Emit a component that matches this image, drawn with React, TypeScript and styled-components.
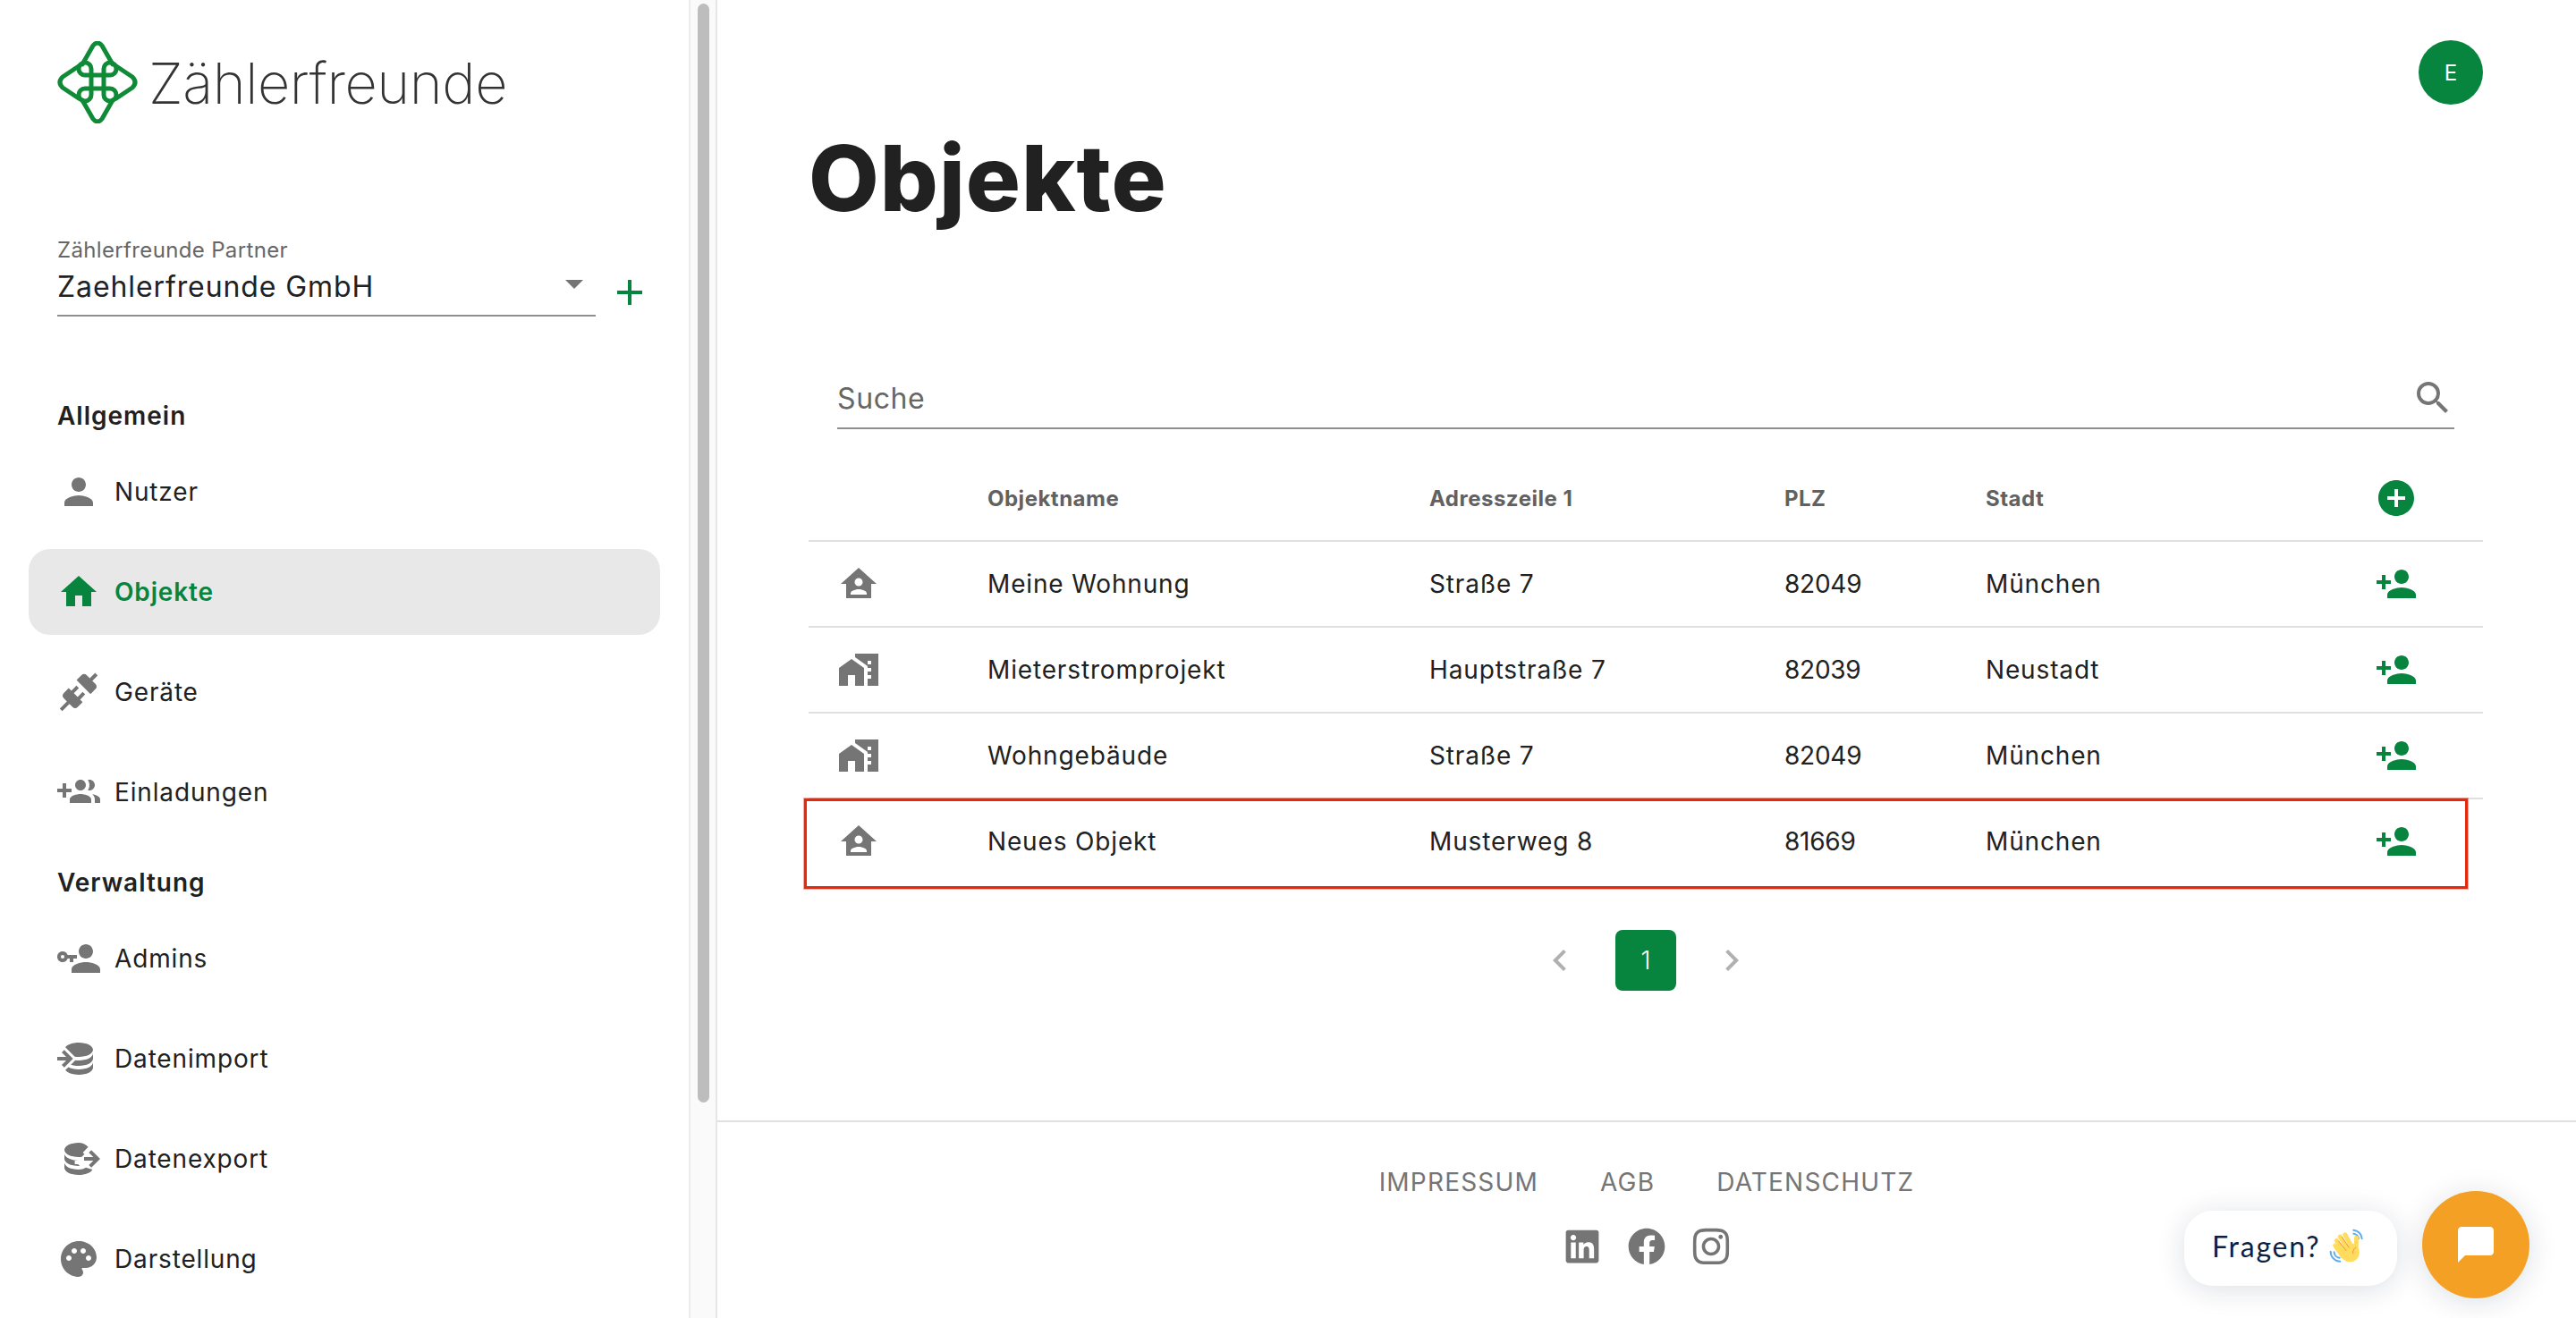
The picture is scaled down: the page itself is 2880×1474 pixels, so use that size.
import React from 'react';
import styled, { createGlobalStyle } from 'styled-components';
import {
  MdAdd,
  MdAddCircle,
  MdChatBubble,
  MdChevronLeft,
  MdChevronRight,
  MdHome,
  MdMapsHomeWork,
  MdPalette,
  MdPerson,
  MdPersonAdd,
  MdSearch,
} from 'react-icons/md';
import { FaFacebook, FaInstagram, FaLinkedin } from 'react-icons/fa';

const GREEN = '#07853f';
const GREY = '#757575';

const GlobalStyle = createGlobalStyle`
  html, body {
    margin: 0;
    padding: 0;
    height: 100%;
    overflow: hidden;
    background: #fff;
  }
  body {
    font-family: Inter, "Liberation Sans", sans-serif;
    color: #212121;
  }
  * { box-sizing: border-box; }
`;

const Page = styled.div`
  display: flex;
  width: 2880px;
  height: 1474px;
  overflow: hidden;
`;

/* sidebar */

const Sidebar = styled.aside`
  display: flex;
  flex: 0 0 802px;
  height: 100%;
  border-right: 2px solid #e6e6e6;
`;

const SideContent = styled.div`
  flex: 1;
  padding: 46px 32px 0;
  overflow: hidden;
`;

const ScrollTrack = styled.div`
  flex: 0 0 30px;
  padding: 4px 7px 0 8px;
  background: #fafafa;
  border-left: 2px solid #ececec;
`;

const ScrollThumb = styled.div`
  height: 1229px;
  border-radius: 8px;
  background: #bdbdbd;
`;

const Logo = styled.div`
  display: flex;
  align-items: center;
  gap: 12px;
  height: 92px;
  margin-left: 32px;
`;

const LogoText = styled.span`
  font-size: 63px;
  font-weight: 200;
  line-height: 1;
  letter-spacing: -0.45px;
  color: #333;
  padding-top: 2px;
`;

const PartnerRow = styled.div`
  display: flex;
  align-items: flex-end;
  margin: 122px 0 0 32px;
`;

const PartnerSelect = styled.div`
  position: relative;
  width: 602px;
  height: 94px;
  padding-top: 2px;
  border-bottom: 2px solid #8e8e8e;
`;

const PartnerLabel = styled.div`
  font-size: 24px;
  line-height: 36px;
  color: #666;
  letter-spacing: 0.35px;
`;

const PartnerValue = styled.div`
  margin-top: 1px;
  font-size: 32px;
  line-height: 44px;
  letter-spacing: 0.9px;
`;

const SelectArrow = styled.span`
  position: absolute;
  right: 14px;
  top: 53px;
  width: 0;
  height: 0;
  border-left: 10px solid transparent;
  border-right: 10px solid transparent;
  border-top: 10px solid ${GREY};
`;

const AddPartner = styled.span`
  display: flex;
  margin: 0 0 3px 14px;
  color: ${GREEN};
`;

const SectionTitle = styled.h2<{ $top: number }>`
  margin: ${(p) => p.$top}px 0 0 32px;
  font-size: 28px;
  font-weight: 600;
  line-height: 42px;
  letter-spacing: 1px;
`;

const NavList = styled.nav`
  display: flex;
  flex-direction: column;
  gap: 16px;
  margin-top: 16px;
`;

const NavItem = styled.a<{ $active?: boolean }>`
  display: flex;
  align-items: center;
  gap: 16px;
  width: 706px;
  height: 96px;
  padding-left: 32px;
  border-radius: 24px;
  font-size: 28px;
  letter-spacing: 0.85px;
  font-weight: ${(p) => (p.$active ? 600 : 400)};
  color: ${(p) => (p.$active ? GREEN : '#212121')};
  background: ${(p) => (p.$active ? '#e8e8e8' : 'transparent')};

  svg {
    flex: 0 0 48px;
    color: ${(p) => (p.$active ? GREEN : GREY)};
  }
`;

/* main */

const Main = styled.main`
  position: relative;
  flex: 1;
  display: flex;
  flex-direction: column;
  min-width: 0;
`;

const Content = styled.section`
  flex: 0 0 1255px;
  padding: 45px 104px 0 102px;
  border-bottom: 2px solid #e0e0e0;
`;

const TopBar = styled.div`
  display: flex;
  justify-content: flex-end;
  margin-bottom: 7px;
`;

const Avatar = styled.div`
  display: flex;
  align-items: center;
  justify-content: center;
  width: 72px;
  height: 72px;
  border-radius: 50%;
  background: ${GREEN};
  color: #fff;
  font-size: 24px;
`;

const Title = styled.h1`
  margin: 0;
  font-size: 102px;
  font-weight: 800;
  line-height: 150px;
  letter-spacing: 1px;
  color: #212121;
`;

const SearchBar = styled.div`
  display: flex;
  align-items: center;
  justify-content: space-between;
  height: 70px;
  margin: 136px 32px 0;
  padding-top: 2px;
  border-bottom: 2px solid #8e8e8e;
  font-size: 32px;
  color: #666;
  letter-spacing: 0.6px;

  svg {
    color: ${GREY};
  }
`;

const Table = styled.div`
  margin-top: 30px;
`;

const Row = styled.div<{ $highlight?: boolean; $header?: boolean }>`
  position: relative;
  display: grid;
  grid-template-columns: 200px 494px 397px 225px 362px 194px;
  align-items: center;
  height: 96px;
  font-size: ${(p) => (p.$header ? '24px' : '28px')};
  font-weight: ${(p) => (p.$header ? 700 : 400)};
  color: ${(p) => (p.$header ? '#616161' : '#212121')};
  letter-spacing: ${(p) => (p.$header ? '0.5px' : '0.85px')};
  border-bottom: 2px solid ${(p) => (p.$highlight ? 'transparent' : '#e0e0e0')};

  ${(p) =>
    p.$highlight &&
    `
    &::after {
      content: '';
      position: absolute;
      left: -5px;
      right: 17px;
      top: -1px;
      bottom: -6px;
      border: 3px solid #e5290e;
      box-shadow: 0 0 0 1px rgba(229, 41, 14, 0.4);
      pointer-events: none;
    }
  `}
`;

const IconCell = styled.div`
  display: flex;
  justify-content: flex-start;
  padding-left: 32px;
  color: ${GREY};
`;

const ZipCell = styled.div`
  letter-spacing: -0.25px;
`;

const ActionCell = styled.div`
  display: flex;
  justify-content: center;
  color: ${GREEN};
`;

const Pagination = styled.div`
  display: flex;
  align-items: center;
  justify-content: center;
  gap: 28px;
  margin-top: 50px;
`;

const PageArrow = styled.span`
  display: flex;
  justify-content: center;
  width: 68px;
  color: #b0b0b0;
`;

const PageButton = styled.span`
  display: flex;
  align-items: center;
  justify-content: center;
  width: 68px;
  height: 68px;
  border-radius: 8px;
  background: ${GREEN};
  color: #fff;
  font-size: 28px;
  font-weight: 300;
`;

const Footer = styled.footer`
  display: flex;
  flex-direction: column;
  align-items: center;
  padding-top: 46px;
`;

const FooterLinks = styled.div`
  display: flex;
  gap: 69px;
  font-size: 28px;
  line-height: 42px;
  letter-spacing: 1.2px;
  color: ${GREY};
`;

const SocialRow = styled.div`
  display: flex;
  align-items: center;
  gap: 30px;
  margin-top: 30px;
  color: ${GREY};

  svg:last-child {
    margin: -2px;
  }
`;

const ChatWidget = styled.div`
  position: absolute;
  right: 52px;
  bottom: 22px;
  display: flex;
  align-items: center;
  gap: 28px;
`;

const ChatBubble = styled.div`
  display: flex;
  align-items: center;
  gap: 10px;
  width: 238px;
  height: 84px;
  margin-top: 8px;
  padding: 0 0 6px 31px;
  border-radius: 32px;
  background: #fff;
  box-shadow: 0 4px 32px rgba(15, 31, 63, 0.14);
  font-family: Lato, sans-serif;
  font-size: 32px;
  letter-spacing: 1.8px;
  color: #0f1f3f;
`;

const ChatButton = styled.div`
  display: flex;
  align-items: center;
  justify-content: center;
  width: 120px;
  height: 120px;
  border-radius: 50%;
  background: #f4a025;
  box-shadow: 0 4px 32px rgba(15, 31, 63, 0.14);
  color: #fff;
`;

const Mdi: React.FC<{ d: string; size?: number }> = ({ d, size = 48 }) => (
  <svg width={size} height={size} viewBox="0 0 24 24" fill="currentColor">
    <path d={d} />
  </svg>
);

const HOME_ACCOUNT =
  'M12,3L2,12H5V20H19V12H22L12,3M12,8.75A2.25,2.25 0 0,1 14.25,11A2.25,2.25 0 0,1 12,13.25A2.25,2.25 0 0,1 9.75,11A2.25,2.25 0 0,1 12,8.75M12,15C13.5,15 16.5,15.75 16.5,17.25V18H7.5V17.25C7.5,15.75 10.5,15 12,15Z';
const CONNECTION =
  'M21.4 7.5c.8.8.8 2.1 0 2.8l-2.8 2.8-7.8-7.8 2.8-2.8c.8-.8 2.1-.8 2.8 0l1.8 1.8 3-3 1.4 1.4-3 3 1.8 1.8m-5.8 5.8-1.4-1.4-2.8 2.8-2.1-2.1 2.8-2.8-1.4-1.4-2.8 2.8-1.5-1.4-2.8 2.8c-.8.8-.8 2.1 0 2.8l1.8 1.8-4 4 1.4 1.4 4-4 1.8 1.8c.8.8 2.1.8 2.8 0l2.8-2.8-1.4-1.4 2.8-2.9z';
const GROUP_ADD =
  'M8 10H5V7H3v3H0v2h3v3h2v-3h3v-2zm10 1c1.66 0 3-1.34 3-3s-1.34-3-3-3c-.32 0-.63.05-.91.14.57.81.9 1.79.9 2.86s-.34 2.04-.9 2.86c.28.09.59.14.91.14zm-5 0c1.66 0 3-1.34 3-3s-1.34-3-3-3-3 1.34-3 3 1.34 3 3 3zm6.62 2.16c.83.73 1.38 1.66 1.38 2.84v2h3v-2c0-1.54-2.37-2.49-4.38-2.84zM13 13c-2 0-6 1-6 3v2h12v-2c0-2-4-3-6-3z';
const ACCOUNT_KEY =
  'M11 10V12H9V14H7V12H5.8C5.4 13.2 4.3 14 3 14C1.3 14 0 12.7 0 11S1.3 8 3 8C4.3 8 5.4 8.8 5.8 10H11M3 10C2.4 10 2 10.4 2 11S2.4 12 3 12 4 11.6 4 11 3.6 10 3 10M16 14C18.7 14 24 15.3 24 18V20H8V18C8 15.3 13.3 14 16 14M16 12C13.8 12 12 10.2 12 8S13.8 4 16 4 20 5.8 20 8 18.2 12 16 12Z';
const DATABASE_IMPORT =
  'M12,3C8.59,3 5.69,4.07 4.54,5.57L9.79,10.82C10.5,10.93 11.22,11 12,11C16.42,11 20,9.21 20,7C20,4.79 16.42,3 12,3M3.92,7.08L2.5,8.5L5,11H0V13H5L2.5,15.5L3.92,16.92L8.84,12M20,9C20,11.21 16.42,13 12,13C11.34,13 10.7,12.95 10.09,12.87L7.62,15.34C8.88,15.75 10.38,16 12,16C16.42,16 20,14.21 20,12M20,14C20,16.21 16.42,18 12,18C9.72,18 7.67,17.5 6.21,16.75L4.53,18.43C5.67,19.93 8.58,21 12,21C16.42,21 20,19.21 20,17';
const DATABASE_EXPORT =
  'M12,3C7.58,3 4,4.79 4,7C4,9.21 7.58,11 12,11C12.6,11 13.2,10.97 13.76,10.9L15.2,9.4L14.3,8.5L17.3,5.4C15.9,3.96 14.1,3 12,3M4,9V12C4,14.21 7.58,16 12,16C12.2,16 12.4,16 12.6,16L11.6,15H9.8V13H11.6L10.7,12.9C7,12.5 4,10.9 4,9M19.08,7.08L17.67,8.5L20.17,11H15V13H20.17L17.67,15.5L19.08,16.92L24,12M4,14V17C4,19.21 7.58,21 12,21C15.7,21 18.8,19.75 19.7,18L16,16.9C14.8,17.6 13.4,18 12,18C7.58,18 4,16.21 4,14Z';

const LogoMark: React.FC = () => (
  <svg width="90" height="92" viewBox="0 0 90 92" fill="none" stroke="#0f8a36" strokeWidth="5" strokeLinejoin="round" strokeLinecap="round">
    <path d="M28 26L40 5Q45 -1 50 5L62 26" />
    <path d="M66 28L84 40Q90 46 84 52L66 64" />
    <path d="M24 28L6 40Q0 46 6 52L24 64" />
    <path d="M28 66L40 87Q45 93 50 87L62 66" />
    <path d="M38 52V31A7 7 0 1 0 31 38H59A7 7 0 1 0 52 31V60A7 7 0 1 0 59 53H31A7 7 0 1 0 38 60V52" />
  </svg>
);

const WaveEmoji: React.FC = () => (
  <svg width="40" height="40" viewBox="0 0 36 36" fill="none" strokeLinecap="round">
    <path d="M24.5 2.5a9 9 0 0 1 8.5 8.5M24.6 6a5.5 5.5 0 0 1 5 5" stroke="#5dadec" strokeWidth="1.8" />
    <path d="M1.5 24a10 10 0 0 0 9.5 10M5 24.5a6 6 0 0 0 5.5 5.8" stroke="#5dadec" strokeWidth="1.8" />
    <g stroke="#ffdc5d" strokeWidth="4.4">
      <path d="M14 29L6 18" />
      <path d="M16 26L7.5 13" />
      <path d="M20 24L11 9" />
      <path d="M23 20L16 7" />
      <path d="M27 24L27.5 10" />
    </g>
    <circle cx="21" cy="25" r="9.5" fill="#ffdc5d" />
    <path d="M9.5 13.5L17 23M13 9.5L20 20M24 26a5 5 0 0 1 3-6" stroke="#ef9645" strokeWidth="0.9" />
  </svg>
);

const rows = [
  { icon: HOME_ACCOUNT, name: 'Meine Wohnung', address: 'Straße 7', zip: '82049', city: 'München' },
  { icon: null, name: 'Mieterstromprojekt', address: 'Hauptstraße 7', zip: '82039', city: 'Neustadt' },
  { icon: null, name: 'Wohngebäude', address: 'Straße 7', zip: '82049', city: 'München' },
  { icon: HOME_ACCOUNT, name: 'Neues Objekt', address: 'Musterweg 8', zip: '81669', city: 'München' },
];

const App: React.FC = () => (
  <Page>
    <GlobalStyle />
    <Sidebar>
      <SideContent>
        <Logo>
          <LogoMark />
          <LogoText>Zählerfreunde</LogoText>
        </Logo>

        <PartnerRow>
          <PartnerSelect>
            <PartnerLabel>Zählerfreunde Partner</PartnerLabel>
            <PartnerValue>Zaehlerfreunde GmbH</PartnerValue>
            <SelectArrow />
          </PartnerSelect>
          <AddPartner>
            <MdAdd size={48} />
          </AddPartner>
        </PartnerRow>

        <SectionTitle $top={90}>Allgemein</SectionTitle>
        <NavList>
          <NavItem><MdPerson size={48} />Nutzer</NavItem>
          <NavItem $active><MdHome size={48} />Objekte</NavItem>
          <NavItem><Mdi d={CONNECTION} />Geräte</NavItem>
          <NavItem><Mdi d={GROUP_ADD} />Einladungen</NavItem>
        </NavList>

        <SectionTitle $top={32}>Verwaltung</SectionTitle>
        <NavList>
          <NavItem><Mdi d={ACCOUNT_KEY} />Admins</NavItem>
          <NavItem><Mdi d={DATABASE_IMPORT} />Datenimport</NavItem>
          <NavItem><Mdi d={DATABASE_EXPORT} />Datenexport</NavItem>
          <NavItem><MdPalette size={48} />Darstellung</NavItem>
        </NavList>
      </SideContent>
      <ScrollTrack>
        <ScrollThumb />
      </ScrollTrack>
    </Sidebar>

    <Main>
      <Content>
        <TopBar>
          <Avatar>E</Avatar>
        </TopBar>
        <Title>Objekte</Title>

        <SearchBar>
          Suche
          <MdSearch size={48} />
        </SearchBar>

        <Table>
          <Row $header>
            <div />
            <div>Objektname</div>
            <div>Adresszeile 1</div>
            <div>PLZ</div>
            <div>Stadt</div>
            <ActionCell><MdAddCircle size={48} /></ActionCell>
          </Row>
          {rows.map((row, i) => (
            <Row key={row.name} $highlight={i === rows.length - 1}>
              <IconCell>
                {row.icon ? <Mdi d={row.icon} /> : <MdMapsHomeWork size={48} />}
              </IconCell>
              <div>{row.name}</div>
              <div>{row.address}</div>
              <ZipCell>{row.zip}</ZipCell>
              <div>{row.city}</div>
              <ActionCell><MdPersonAdd size={48} /></ActionCell>
            </Row>
          ))}
        </Table>

        <Pagination>
          <PageArrow><MdChevronLeft size={48} /></PageArrow>
          <PageButton>1</PageButton>
          <PageArrow><MdChevronRight size={48} /></PageArrow>
        </Pagination>
      </Content>

      <Footer>
        <FooterLinks>
          <span>IMPRESSUM</span>
          <span>AGB</span>
          <span>DATENSCHUTZ</span>
        </FooterLinks>
        <SocialRow>
          <FaLinkedin size={42} />
          <FaFacebook size={42} />
          <FaInstagram size={46} />
        </SocialRow>
      </Footer>

      <ChatWidget>
        <ChatBubble>
          Fragen?
          <WaveEmoji />
        </ChatBubble>
        <ChatButton>
          <MdChatBubble size={48} />
        </ChatButton>
      </ChatWidget>
    </Main>
  </Page>
);

export default App;
